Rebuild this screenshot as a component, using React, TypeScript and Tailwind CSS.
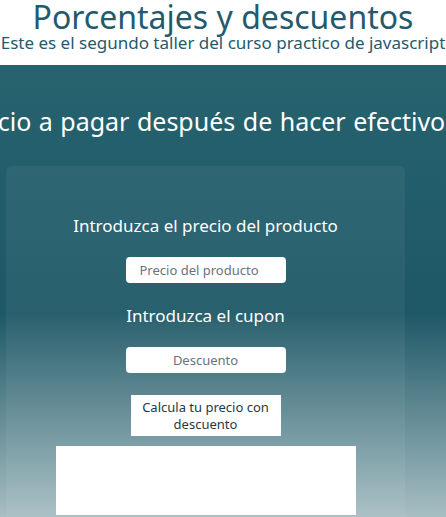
export default function App() {
  return (
    <div className="w-[446px] h-[517px] overflow-hidden bg-white font-['Noto_Sans',sans-serif]">
      {/* header */}
      <header className="h-[65px] flex flex-col items-center text-[#245a6e]">
        <h1 className="text-[32px] leading-[32px] mt-[1px] whitespace-nowrap">Porcentajes y descuentos</h1>
        <p className="text-[17px] leading-[20px] whitespace-nowrap">
          Este es el segundo taller del curso practico de javascript
        </p>
      </header>

      <main className="h-[452px] bg-[linear-gradient(180deg,#27626f_0%,#1e5866_55%,#a7bec3_100%)] overflow-hidden">
        <div className="flex justify-center pt-[40px] h-[101px] pr-[4px]">
          <h2 className="text-[25px] leading-[32px] [word-spacing:1px] text-white whitespace-nowrap">
            Calcula el precio a pagar después de hacer efectivo el descuento
          </h2>
        </div>

        <section className="ml-[6px] w-[399px] h-[360px] rounded-[6px] bg-white/5 flex flex-col items-center pt-[48px]">
          <label className="text-[17px] leading-[24px] text-white">Introduzca el precio del producto</label>
          <input
            type="text"
            placeholder="Precio del producto"
            className="mt-[19px] w-[160px] h-[26px] rounded-[4px] bg-white px-[14px] text-[13px] text-gray-700 placeholder:text-gray-500 outline-none"
          />
          <label className="mt-[21px] text-[17px] leading-[24px] text-white">Introduzca el cupon</label>
          <input
            type="text"
            placeholder="Descuento"
            className="mt-[19px] w-[160px] h-[26px] rounded-[4px] bg-white px-[14px] text-center text-[13px] text-gray-700 placeholder:text-gray-500 outline-none"
          />
          <button className="mt-[22px] w-[150px] h-[41px] bg-white text-[13px] leading-[17px] text-[#1f3a44]">
            Calcula tu precio con descuento
          </button>
          <div className="mt-[10px] w-[300px] h-[69px] bg-white" />
        </section>
      </main>
    </div>
  );
}
